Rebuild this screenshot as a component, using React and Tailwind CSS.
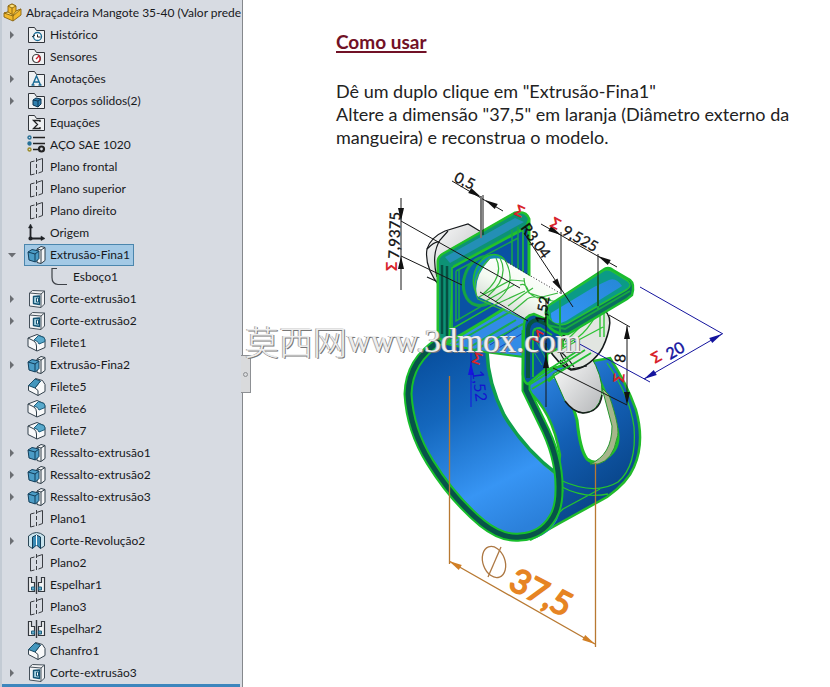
import { useState } from 'react'
import clsx from 'clsx'

const features = [
  { label: 'Histórico', icon: 'history', children: true },
  { label: 'Sensores', icon: 'sensor' },
  { label: 'Anotações', icon: 'annotation', children: true },
  { label: 'Corpos sólidos(2)', icon: 'bodies', children: true },
  { label: 'Equações', icon: 'equation' },
  { label: 'AÇO SAE 1020', icon: 'material' },
  { label: 'Plano frontal', icon: 'plane' },
  { label: 'Plano superior', icon: 'plane' },
  { label: 'Plano direito', icon: 'plane' },
  { label: 'Origem', icon: 'origin' },
  { label: 'Extrusão-Fina1', icon: 'extrude', children: true, open: true },
  { label: 'Esboço1', icon: 'sketch', nested: true },
  { label: 'Corte-extrusão1', icon: 'cut', children: true },
  { label: 'Corte-extrusão2', icon: 'cut', children: true },
  { label: 'Filete1', icon: 'fillet' },
  { label: 'Extrusão-Fina2', icon: 'extrude', children: true },
  { label: 'Filete5', icon: 'chamfer' },
  { label: 'Filete6', icon: 'fillet' },
  { label: 'Filete7', icon: 'fillet' },
  { label: 'Ressalto-extrusão1', icon: 'extrude', children: true },
  { label: 'Ressalto-extrusão2', icon: 'extrude', children: true },
  { label: 'Ressalto-extrusão3', icon: 'extrude', children: true },
  { label: 'Plano1', icon: 'plane' },
  { label: 'Corte-Revolução2', icon: 'revolve', children: true },
  { label: 'Plano2', icon: 'plane' },
  { label: 'Espelhar1', icon: 'mirror' },
  { label: 'Plano3', icon: 'plane' },
  { label: 'Espelhar2', icon: 'mirror' },
  { label: 'Chanfro1', icon: 'chamfer' },
  { label: 'Corte-extrusão3', icon: 'cut', children: true },
]

const folder = <path d="M1.5 17.5v-15h6l2 3h8v12z" fill="#eef0f2" stroke="#30343a" />

const icons = {
  part: (
    <g stroke="#8a6410" strokeWidth="0.9" strokeLinejoin="round">
      <path d="M1 10l4-1V3l4-2 4 2v5l5-2v6l-8 6-9-4z" fill="#f2b92c" />
      <path d="M5 3l4-2 4 2-4 2zM1 10l4-1 5 3 3-4 5-2-8 7z" fill="#ffe27a" />
      <path d="M9 5v6M10 12v6" fill="none" />
    </g>
  ),
  history: (
    <>
      {folder}
      <circle cx="10.500" cy="11.500" r="4" fill="#fff" stroke="#1b6c96" strokeWidth="1.300" />
      <path d="M10.500 9.500v2.500h3M5 12l3-2" fill="none" stroke="#222" />
    </>
  ),
  sensor: (
    <>
      {folder}
      <circle cx="9.500" cy="11.500" r="4" fill="#fff" stroke="#444" strokeWidth="1.200" />
      <path d="M11 8a4 4 0 0 1 0 7M9 12l3-3" fill="none" stroke="#c8202c" strokeWidth="1.300" />
    </>
  ),
  annotation: (
    <>
      {folder}
      <path d="M5.500 16l4-9 4 9M7 13h5M4.500 16h3M11.500 16h3" fill="none" stroke="#1b6c96" strokeWidth="1.400" />
    </>
  ),
  bodies: (
    <>
      {folder}
      <path d="M6 9l3-2 5 1v5l-3 3-5-2z" fill="#2f7fae" stroke="#0b3553" />
      <path d="M6 9l5 1v6M11 10l3-2" fill="none" stroke="#0b3553" />
    </>
  ),
  equation: (
    <>
      {folder}
      <path d="M13 9V7.500H6.500l4 4-4 4H13V14" fill="none" stroke="#222" strokeWidth="1.300" />
    </>
  ),
  material: (
    <g fill="none" stroke="#222" strokeWidth="1.400">
      <path d="M6 2.500h12M6 8.500h12M6 14.500h5" />
      <circle cx="2.500" cy="2.500" r="1.500" stroke="#256f96" />
      <circle cx="2.500" cy="8.500" r="1.500" fill="#256f96" stroke="#256f96" />
      <circle cx="2.500" cy="14.500" r="1.500" stroke="#9b8b26" />
      <circle cx="14.500" cy="14" r="2.500" strokeWidth="2.200" />
    </g>
  ),
  plane: (
    <g fill="none" stroke="#3a3d42">
      <path d="M7.500 4L3.500 5v13l4-1M10 3.300l5.500-1.800v13L11.500 16" />
      <path d="M9.500 1v18" strokeDasharray="4 2" />
    </g>
  ),
  origin: (
    <g fill="none" stroke="#1f2226" strokeWidth="1.800">
      <path d="M3.500 3v12.500H16" />
      <path d="M1.500 5l2-4 2 4zM14 13l4 2.500-4 2z" fill="#1f2226" strokeWidth="0.500" />
      <circle cx="3.500" cy="15.500" r="1.200" fill="#1f2226" />
    </g>
  ),
  extrude: (
    <g strokeLinejoin="round">
      <path d="M10 4l4-2.500 4 1v13l-4 3-4-1z" fill="#f6f7f8" stroke="#2e3c47" />
      <path d="M14 5v13M10 4l4 1 4-2.500" fill="none" stroke="#2e3c47" />
      <path d="M1 7l4-2.500 7 1.500v7.500L8.500 17 2 15z" fill="#4b9cc6" stroke="#123e5a" />
      <path d="M1 7l7 2v8M8 9l4-3" fill="none" stroke="#123e5a" />
    </g>
  ),
  sketch: <path d="M17 17.500H8q-6-.500-6-7V1.500h5" fill="none" stroke="#3d4147" strokeWidth="1.200" />,
  cut: (
    <g strokeLinejoin="round">
      <path d="M2.500 4l3-2.500 12 .500v13L14 18.500 2.500 17z" fill="#f2f3f5" stroke="#45505a" />
      <path d="M2.500 4l11.500 1v13.500M14 5l3.500-3" fill="none" stroke="#45505a" />
      <path d="M6.500 7.500l6-.500v8.500l-6-1z" fill="#a9d5e5" stroke="#145474" strokeWidth="1.400" />
      <path d="M9.500 9h2v4h-2z" fill="#fff" stroke="#145474" />
    </g>
  ),
  fillet: (
    <g strokeLinejoin="round">
      <path d="M1 5l9-3.500 7 3q1 1 1 4v6L10 18l-9-4.500z" fill="#f8f9fa" stroke="#33414c" />
      <path d="M1 5l6 3q2.500 2 2.500 5v5" fill="none" stroke="#33414c" />
      <path d="M7 7l4.500-4.500L17 4.500q1 1.500 1 4L12 11q-.500-3-5-4z" fill="#58a9cc" stroke="#1d5d7c" />
    </g>
  ),
  chamfer: (
    <g strokeLinejoin="round">
      <path d="M1.500 9l7-7.500 7 2 2.500 4v7l-7 4-9.500-5z" fill="#f8f9fa" stroke="#33414c" />
      <path d="M8 11l3 2.500v5M8 11l5.500-7" fill="none" stroke="#33414c" />
      <path d="M1.500 8.500l6.500-6.500 5.500 2L8 11z" fill="#4396bd" stroke="#174c68" />
    </g>
  ),
  revolve: (
    <g strokeLinejoin="round">
      <path d="M1.500 5q8-7 16 0v10l-4 2.500V13l-4-3-4 3v4.500l-4-2.500z" fill="#c9e4ee" stroke="#2d4857" />
      <path d="M5.500 6l4-2 4 2v11.500l-4-3.500-4 3.500z" fill="#398ab4" stroke="#123e5a" />
      <path d="M9.500 4v10" stroke="#fff" />
    </g>
  ),
  mirror: (
    <g fill="#f2f4f5" stroke="#33383e">
      <path d="M1.500 2.500h3v5h3v9h-6zM17.500 2.500h-3v5h-3v9h6z" strokeWidth="1.200" />
      <path d="M4.500 12h3v3h-3zM11.500 12h3v3h-3z" fill="#62acca" stroke="#205f7e" />
      <path d="M9.500 1v18" strokeWidth="1.400" />
    </g>
  ),
}

function FeatureIcon({ name }) {
  return (
    <svg viewBox="0 0 19 20" className="h-5 w-[19px] shrink-0" aria-hidden="true">
      {icons[name]}
    </svg>
  )
}

function FeatureRow({ item, selected, onSelect }) {
  const [open, setOpen] = useState(Boolean(item.open))

  return (
    <li className={clsx('flex h-[22px] items-center', item.nested ? 'pl-[47px]' : 'pl-[6px]')}>
      {!item.nested && (
        <span className="flex w-[18px] shrink-0">
          {item.children && (
            <button type="button" aria-label={`Expandir ${item.label}`} aria-expanded={open} onClick={() => setOpen(!open)} className="p-px">
              <svg viewBox="0 0 10 10" className="h-[10px] w-[10px]" fill="#6b6e73">
                {open ? <path d="M1 3h8L5 7.500z" /> : <path d="M3 1l4 4-4 4z" />}
              </svg>
            </button>
          )}
        </span>
      )}
      <button
        type="button"
        onClick={onSelect}
        className={clsx(
          'flex h-[22px] items-center gap-1 border pl-[2px] pr-[3px] whitespace-nowrap',
          selected ? 'border-[#4b86ad] bg-[#a3c9e5]' : 'border-transparent',
        )}
      >
        <FeatureIcon name={item.icon} />
        {item.label}
      </button>
    </li>
  )
}

function FeatureTree() {
  const [selected, setSelected] = useState('Extrusão-Fina1')

  return (
    <aside className="relative flex w-[243px] shrink-0 flex-col border-r border-r-[#85888c] border-l-2 border-l-[#c3cbd4] bg-[#d7dbe2] pt-[2px] font-[Lato,sans-serif] text-xs text-[#17191c]">
      <div className="flex h-[22px] items-center gap-1 pl-px whitespace-nowrap">
        <FeatureIcon name="part" />
        <span>Abraçadeira Mangote 35-40 (Valor prede</span>
      </div>
      <ul className="-ml-[2px]">
        {features.map((item) => (
          <FeatureRow key={item.label} item={item} selected={selected === item.label} onSelect={() => setSelected(item.label)} />
        ))}
      </ul>
      <div className="mt-auto mr-[2px] h-[3px] bg-[#3d86bd]" />
      <button type="button" aria-label="Recolher painel" className="absolute top-[355px] -right-[9px] flex h-[38px] w-[10px] items-center justify-center border border-l-0 border-[#8d9094] bg-[#d9dadc]">
        <span className="h-[5px] w-[5px] rounded-full border border-[#8b8d90]" />
      </button>
    </aside>
  )
}

// Dimension arrow head, tip at (x, y) and pointing along the angle
function Arrow({ x, y, angle, color = '#111' }) {
  return <path d="M0 0l-13-3v6z" fill={color} transform={`translate(${x} ${y}) rotate(${angle})`} />
}

function ClampModel() {
  return (
    <svg viewBox="380 165 360 495" className="h-[495px] w-[360px]" role="img" aria-label="Abraçadeira 35-40 com cotas" fontFamily="Lato, sans-serif">
      <defs>
        <linearGradient id="inner" x1="0.200" y1="0" x2="0.600" y2="1">
          <stop offset="0" stopColor="#074c9a" />
          <stop offset="0.350" stopColor="#1467bd" />
          <stop offset="0.750" stopColor="#3795f4" />
          <stop offset="1" stopColor="#2b80da" />
        </linearGradient>
        <linearGradient id="outer" x1="0" y1="0" x2="0.500" y2="1">
          <stop offset="0" stopColor="#3590ef" />
          <stop offset="0.500" stopColor="#135fb4" />
          <stop offset="1" stopColor="#063f80" />
        </linearGradient>
        <linearGradient id="tab" x1="0" y1="1" x2="1" y2="0">
          <stop offset="0" stopColor="#3495f5" />
          <stop offset="1" stopColor="#2688d7" />
        </linearGradient>
        <linearGradient id="steel" x1="0" y1="0" x2="1" y2="1">
          <stop offset="0" stopColor="#fff" />
          <stop offset="1" stopColor="#b5b7b9" />
        </linearGradient>
        <linearGradient id="shaft" x1="0" y1="1" x2="0.600" y2="0">
          <stop offset="0" stopColor="#b9bcbb" />
          <stop offset="0.600" stopColor="#f4fbf2" />
          <stop offset="1" stopColor="#fff" />
        </linearGradient>
      </defs>

      {/* Bolt head behind the left ear */}
      <path d="M440 287q-16-20-13-38 4-12 18-18l23-7 15 9v54z" fill="url(#steel)" stroke="#16191c" strokeWidth="1.200" />
      <path d="M437 277q-6-22 3-37l8-9M427 277l11 5M427 249q8-8 12-7" fill="none" stroke="#16191c" strokeWidth="1.200" />

      {/* Outer band with the slot */}
      <path
        d="M523 380L552 368L610 358Q627 384 636 410Q645 442 634 467Q628 482 607 497L560 523L530 540L555 500L560 455Q552 410 527 390Z"
        fill="url(#outer)"
        stroke="#22bb2b"
        strokeWidth="2.500"
      />
      <path d="M548 381L556 374Q571 395 577 420Q580 450 587 459Q597 467 609 456Q621 446 617 429Q609 395 590 362" fill="#fff" stroke="#20bf2a" strokeWidth="3" />
      <path d="M590 464Q612 455 612 426L602 388L609 395Q621 430 617 438Q613 460 598 464Z" fill="#a6b68b" stroke="#269630" />
      <path d="M553 374L590 355Q603 376 602 394Q598 413 583 413Q571 411 565 401Z" fill="url(#steel)" stroke="#15901f" />
      <path d="M565 401q8 11 18 12 17-1 19-18" fill="none" stroke="#171b1b" strokeWidth="1.500" />
      <g fill="none" stroke="#26c52e" strokeWidth="1.300">
        <path d="M560 480Q595 496 618 482Q637 466 634 427Q630 396 607 363" />
        <path d="M560 486Q584 499 608 494M547 524L563 509L600 489M545 532Q558 520 563 490" />
      </g>

      {/* Inner band */}
      <path
        d="M437 339Q408 356 405 393Q406 430 427 463Q451 501 480 525Q501 542 520 541Q546 540 557 520Q563 506 563 481Q522 450 500 408Q488 377 488 352Z"
        fill="url(#inner)"
      />
      <path d="M488 352Q489 382 505 415Q524 450 557 473Q555 440 534 407L523 388V355Z" fill="#fff" />
      <path d="M487 352Q488 383 504 415Q524 449 558 475" fill="none" stroke="#0fa04c" strokeWidth="3.500" />

      {/* Bridge between the ears */}
      <path d="M440 334L505 292L550 326L524 337V357L485 352L437 342Z" fill="#328be6" stroke="#20b72e" strokeWidth="2" />
      <g fill="none" stroke="#1bad4a" strokeWidth="2">
        <path d="M452 338L521 298M456 343L527 302M470 347L516 320M475 350L523 324M448 331L508 296" />
      </g>
      <path d="M490 345l28-18M497 349l26-16" stroke="#1643b8" />

      {/* Band rim */}
      <path
        d="M440 341Q409 360 408 394Q410 430 430 462Q453 499 482 523Q502 539 520 537Q542 536 553 517Q559 507 559 490Q560 458 542 423L526 390V330"
        fill="none"
        stroke="#18bf2c"
        strokeWidth="9"
      />
      <path
        d="M440 341Q409 360 408 394Q410 430 430 462Q453 499 482 523Q502 539 520 537Q542 536 553 517Q559 507 559 490Q560 458 542 423L526 390V330"
        fill="none"
        stroke="#07534a"
        strokeWidth="5"
      />

      {/* Left ear */}
      <path d="M438 262Q438 257 443 254L515 213Q526 211 529 219V293L486 320L449 342L438 338Z" fill="#0a52a5" stroke="#23c42c" strokeWidth="3" />
      <path d="M438 262Q438 257 443 254L515 213Q526 211 529 219L526 227L454 266L449 342L438 338Z" fill="#0d9275" stroke="#21bf2b" strokeWidth="2" />
      <path d="M445 257L515 218L524 222L450 263Z" fill="#248fb6" />
      <path d="M442 265V334M447 266V338" stroke="#064f42" strokeWidth="2.500" />
      <path d="M452 268L523 230V288L452 329Z" fill="#0952a4" stroke="#25c42c" strokeWidth="1.500" />
      <path d="M456 271L518 238M456 271V321L518 285V227M512 230V284M459 270V320" fill="none" stroke="#18a944" strokeWidth="1.500" />
      <ellipse cx="483" cy="281" rx="19" ry="25" transform="rotate(18 483 281)" fill="#0865a7" stroke="#15a544" strokeWidth="3" />
      <ellipse cx="491" cy="277" rx="17" ry="23" transform="rotate(18 491 277)" fill="#1389b1" stroke="#21bf2d" strokeWidth="1.500" />

      {/* Bolt shaft */}
      <path d="M490 259Q500 257 505 261L559 294L560 326L529 320L477 296Q473 277 490 259Z" fill="url(#shaft)" />
      <g fill="none" stroke="#39b93e" strokeWidth="1.200">
        <path d="M490 258Q468 280 478 299L528 321M500 258Q510 277 488 296M506 262Q518 286 495 302M496 258Q505 276 483 294" />
        <path d="M520 285Q526 282 529 293L551 300M524 278Q525 294 538 298L558 293M513 311L526 300Q532 294 547 300L559 302M508 306L524 294L533 288" />
        <path d="M479 297L511 280L524 281M484 302L514 285M490 307L525 291" />
      </g>
      <path d="M505 261L560 293" stroke="#222" strokeDasharray="1 2" />

      {/* Nut */}
      <path d="M547 346L604 310Q612 316 609 329Q606 343 600 352Q587 369 571 370Q558 365 547 346Z" fill="#e2e6e1" stroke="#14191a" strokeWidth="1.500" />
      <path d="M549 343Q566 354 574 367M560 360l11 9 16-3M565 339q-9 9-2 19l8 12" fill="none" stroke="#171c1b" strokeWidth="1.200" />
      <path d="M554 346Q580 345 596 315M583 324L565 342M558 351L603 327M600 313V337M604 312V337" fill="none" stroke="#2ec335" strokeWidth="1.400" />

      {/* Right ear side */}
      <path d="M524 325Q524 316 534 314L550 321L562 337L563 346L547 354V368L528 384Q523 382 523 374Z" fill="#0852a0" stroke="#1fbd2c" strokeWidth="2.500" />
      <path d="M528 378V329Q529 321 537 320L548 325" fill="none" stroke="#07543f" strokeWidth="4" />
      <path d="M533 377V333Q533 328 540 328L552 335M529 385L585 350M532 389L591 353M534 379L579 350" fill="none" stroke="#21bf30" strokeWidth="1.800" />
      <path d="M534 328L548 350M534 337L546 359M534 352L542 365" stroke="#1bad5b" />

      {/* Right ear top */}
      <path d="M547 317Q543 309 551 304L603 270Q608 266 613 270L630 280Q635 284 632 295L627 299L568 334Q554 335 547 324Z" fill="#0b6e60" stroke="#19bd2e" strokeWidth="2.500" />
      <path d="M549 312Q545 307 553 303L603 271Q608 268 613 272L628 281Q633 286 626 290L568 323Q559 328 549 318Z" fill="#0b9b86" stroke="#24c136" strokeWidth="1.500" />
      <path d="M551 313L594 287L609 280Q616 277 622 286L566 321Q550 328 551 313Z" fill="url(#tab)" />
      <path d="M560 300V333M598 277V309M547 325L565 329L630 291" fill="none" stroke="#16a842" strokeWidth="2" />

      {/* Driven dimensions */}
      <g fill="none" stroke="#171717">
        <path d="M452 181L503 211M483 195V235" />
        <path d="M481 196V238" stroke="#777" strokeWidth="2" />
        <path d="M401 198V290M401 221L520 288M401 256L462 285M480 292L528 321" />
        <path d="M541 224L617 267M561 232V294M598 254V306M524 233L573 307" />
        <path d="M546 299V376M609 315L630 327M627 326V398M546 343V407M553 368L627 405" />
      </g>
      <Arrow x={481} y={197} angle={30} />
      <Arrow x={485} y={200} angle={210} />
      <Arrow x={401} y={221} angle={90} />
      <Arrow x={401} y={256} angle={-90} />
      <Arrow x={561} y={235} angle={30} />
      <Arrow x={598} y={256} angle={210} />
      <Arrow x={562} y={291} angle={57} />
      <Arrow x={627} y={326} angle={-90} />
      <Arrow x={627} y={405} angle={90} />
      <Arrow x={546} y={355} angle={-90} />
      <g fill="#101010" fontSize="15" stroke="#101010" strokeWidth="0.300">
        <text transform="translate(453 181) rotate(26)">0,5</text>
        <text transform="translate(399 259) rotate(-88)">7,9375</text>
        <text transform="translate(520 228) rotate(54)">R3,04</text>
        <text transform="translate(561 234) rotate(29)">9,525</text>
        <text transform="translate(545 324) rotate(-80)" fontSize="14">1,52</text>
        <text transform="translate(625 363) rotate(-85)">8</text>
      </g>
      <g fill="none" stroke="#14149e">
        <path d="M640 287L723 334M574 341L650 382M644 379L722 334" />
        <path d="M471 344V407" stroke="#1616dd" />
      </g>
      <Arrow x={722} y={334} angle={-30} color="#14149e" />
      <Arrow x={644} y={379} angle={150} color="#14149e" />
      <Arrow x={471} y={362} angle={-90} color="#1616dd" />
      <text transform="translate(670 360) rotate(-30)" fontSize="16" fill="#14149e" stroke="#14149e" strokeWidth="0.400">20</text>
      <text transform="translate(472 371) rotate(83)" fontSize="16" fill="#1414cf">1,52</text>
      <g fill="#d8232b" fontSize="15" fontWeight="900">
        <text transform="translate(397 271) rotate(-90)">Σ</text>
        <text transform="translate(513 214) rotate(25)">Σ</text>
        <text transform="translate(549 226) rotate(28)">Σ</text>
        <text transform="translate(655 364) rotate(-30)">Σ</text>
        <text transform="translate(624 383) rotate(-85)">Σ</text>
        <text transform="translate(471 362) rotate(20)">Σ</text>
        <text transform="translate(531 339) rotate(28)">Σ</text>
      </g>

      {/* Driving diameter */}
      <path d="M449.500 376V564M595.500 463V647M449 561L595 644" fill="none" stroke="#b87932" strokeWidth="1.300" />
      <Arrow x={449} y={561} angle={210} color="#d17f25" />
      <Arrow x={595} y={644} angle={30} color="#d17f25" />
      <ellipse cx="494" cy="562" rx="11" ry="16" transform="rotate(-20 494 562)" fill="none" stroke="#ad7843" strokeWidth="1.300" />
      <path d="M501 547L488 577" stroke="#ad7843" strokeWidth="1.300" />
      <text transform="translate(507 588) rotate(27)" fontSize="33" fill="#e68423" stroke="#e68423" strokeWidth="1.800">37,5</text>
    </svg>
  )
}

function App() {
  return (
    <div className="flex min-h-screen bg-white">
      <FeatureTree />
      <main className="relative min-w-0 flex-1 pt-[30px] pl-[93px] pr-9 font-[Lato,sans-serif]">
        <h1 className="text-[19px] leading-6 font-bold text-[#711126] underline decoration-2 underline-offset-2">Como usar</h1>
        <p className="mt-[26px] max-w-[460px] text-lg leading-[23px] text-[#222]">
          Dê um duplo clique em "Extrusão-Fina1"
          <br />
          Altere a dimensão "37,5" em laranja (Diâmetro externo da mangueira) e reconstrua o modelo.
        </p>
        <div className="mt-4 ml-11">
          <ClampModel />
        </div>
        <div className="pointer-events-none absolute top-[323px] left-[2px] flex items-center leading-9 whitespace-nowrap text-[#eee] [text-shadow:1px_1px_0_#777,-1px_0_0_#aaa]">
          <span className="font-['Noto_Sans_CJK_SC',sans-serif] text-[34px] font-light">莫西网</span>
          <span className="font-['Liberation_Serif',serif] text-[33px]">www.3dmox.com</span>
        </div>
      </main>
    </div>
  )
}

export default App
